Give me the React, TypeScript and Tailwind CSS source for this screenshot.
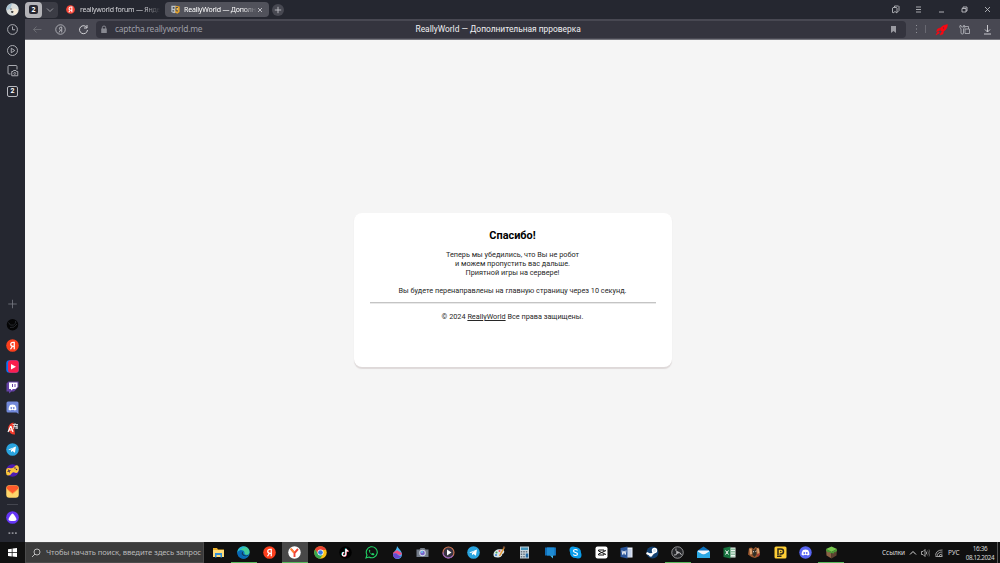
import type { ReactNode } from "react";

type IconProps = { children: ReactNode; size?: string };

const Icon = ({ children, size = "h-[13px] w-[13px]" }: IconProps) => (
	<svg viewBox="0 0 26 26" className={`${size} flex-none`} fill="none">
		{children}
	</svg>
);

const Ya = () => (
	<>
		<circle cx="13" cy="13" r="12.6" fill="#fc3f1d" />
		<path d="M16.500 20.500V6.500h-2.500c-3 0-4.500 1.500-4.500 4 0 2.600 1.500 4 4.500 4h2M13 14.500 9 20.500" stroke="#fff" strokeWidth="2.500" />
	</>
);

const Telegram = () => (
	<>
		<circle cx="13" cy="13" r="12.600" fill="#29a4df" />
		<path d="M4.500 13 20 6.800 17.800 19.500l-5-3.600-2.500 2.400-.5-4.200 6.200-5.200-8 4.900z" fill="#fff" />
	</>
);

const Discord = () => (
	<path
		d="M8 8q5-2.500 10 0 3 4 3 9-2 2-4 2l-1-1.600q-3 .9-6 0L9 19q-2 0-4-2 0-5 3-9zm2.500 4a1.700 2 0 1 0 .1 0zm5 0a1.700 2 0 1 0 .1 0z"
		fill="#fff"
		fillRule="evenodd"
	/>
);

const Sidebar = () => (
	<aside className="flex w-[25px] flex-none flex-col items-center bg-[#252730] text-[#b9bac0]">
		<div className="flex h-[19px] items-center">
			<Icon>
				<circle cx="13" cy="13" r="12.500" fill="#d9dcda" />
				<path d="M3 6q4-6 9-5L9 11l-8 4q-1-5 2-9z" fill="#a8c3d2" />
				<path d="M13 12q7-3 11 3-2 8-8 9z" fill="#f6e9d5" />
				<circle cx="10" cy="12" r="1.500" fill="#555" />
				<path d="M10 16h5l-1 4h-3z" fill="#444" />
			</Icon>
		</div>
		<div className="flex h-[79px] flex-col items-center justify-between pt-[4px]">
			<Icon>
				<circle cx="13" cy="13" r="9.800" stroke="currentColor" strokeWidth="1.800" />
				<path d="M13 7v6.500h5" stroke="currentColor" strokeWidth="1.800" />
			</Icon>
			<Icon>
				<circle cx="13" cy="13" r="10" stroke="currentColor" strokeWidth="1.800" />
				<path d="m10.500 8.500 7 4.500-7 4.500z" stroke="currentColor" strokeWidth="1.800" />
			</Icon>
			<Icon>
				<path d="M9 20H6q-2 0-2-2V5q0-2 2-2h14q2 0 2 2v6" stroke="currentColor" strokeWidth="1.800" />
				<path d="M11.500 15H14l1-2h5l1 2h2.500v8.500h-12z" stroke="currentColor" strokeWidth="1.800" />
				<circle cx="17.500" cy="18.800" r="2" stroke="currentColor" strokeWidth="1.500" />
			</Icon>
			<div className="flex h-[13px] items-center">
				<span className="flex h-[11px] w-[11px] items-center justify-center rounded-[2px] border border-[#b9bac0] pt-px font-['Roboto',sans-serif] text-[7px] leading-none font-bold text-white">
					2
				</span>
			</div>
		</div>
		<div className="mt-auto flex h-[201px] flex-col items-center justify-between">
			<Icon>
				<path d="M13 5.500v17M4.500 14h17" stroke="#7e8089" strokeWidth="1.500" />
			</Icon>
			<Icon>
				<circle cx="13" cy="13.500" r="11.500" fill="#050506" />
				<path d="M5 9q3 8 10 5 7-4 4-8M8 19q9 2 14-7" stroke="#34363d" strokeWidth="1.400" />
			</Icon>
			<Icon>
				<Ya />
			</Icon>
			<Icon>
				<rect x=".5" y=".5" width="25" height="25" rx="6" fill="#0a74f4" />
				<rect x="4" y=".5" width="21.500" height="25" rx="6" fill="#fa1e4e" />
				<path d="m10 8 10 5.500-10 5.500z" fill="#fff" />
			</Icon>
			<Icon>
				<path d="m5 1-4 4v16h5v4l5-4h5l9-9V1z" fill="#6441a5" />
				<path d="M6 3h17v9l-4 4h-5l-4 3v-3H6z" fill="#fff" />
				<path d="M13 6v6M18 6v6" stroke="#6441a5" strokeWidth="2" />
			</Icon>
			<Icon>
				<path d="M4 1h18q3 0 3 3v22l-4-3H4q-3 0-3-3V4q0-3 3-3z" fill="#7289da" />
				<Discord />
			</Icon>
			<Icon>
				<path d="M15 1A12 12 0 1 0 18 25z" fill="#f33b2b" />
				<path d="m4 20 5-11h1l4 11M6.500 16h6" stroke="#fff" strokeWidth="2.300" />
				<path d="M13 5h11M18 2v3M15 9h8M22 5v9M17 6l-2 8M18 12h6" stroke="#e6e6e8" strokeWidth="1.700" />
			</Icon>
			<Icon>
				<Telegram />
			</Icon>
			<Icon>
				<circle cx="13" cy="13" r="12.500" fill="#4d1cb3" />
				<path d="M0 17Q-1 7 6 8q3 1 7 0 3-1 5-4 4-3 7 1 2 6-1 11-3 3-7 1-3-1-5 1-3 5-8 5-4-1-4-6z" fill="#fcc63c" />
				<path d="m5 11 2 6m-4-2 6-2" stroke="#33205e" strokeWidth="1.800" />
				<circle cx="18" cy="8" r="1.500" fill="#33205e" />
				<circle cx="21" cy="11" r="1.500" fill="#33205e" />
			</Icon>
			<Icon>
				<rect x=".5" y=".5" width="25" height="25" rx="6" fill="#ffd66b" />
				<path d="M1 7q0-6 6-6h12q6 0 6 6L13 17z" fill="#ff5a2b" />
				<path d="m1 8 12 9.500L25 8" stroke="#ffa040" strokeWidth="1.500" />
			</Icon>
		</div>
		<div className="mt-[6px] h-px w-[11px] bg-[#44464f]" />
		<div className="mt-[6px]">
			<Icon>
				<circle cx="13" cy="13" r="12.700" fill="#6536f5" />
				<path d="M13 5c2 0 8 9 8 12 0 4-16 4-16 0 0-3 6-12 8-12z" fill="#fff" />
			</Icon>
		</div>
		<div className="mt-[3px] h-[15px]">
			<Icon>
				<path d="M5 12h3.500M11.500 12H15M18 12h3.500" stroke="#8c8d94" strokeWidth="3.500" />
			</Icon>
		</div>
	</aside>
);

const TabBar = () => (
	<header className="flex h-[19px] flex-none items-center bg-[#252730] font-['Noto_Sans',sans-serif] text-[7px] text-[#d4d4d8]">
		<div className="flex h-[16px] w-[33px] items-center rounded-[4px] bg-[#3b3c45]">
			<div className="flex h-[16px] w-[17px] items-center justify-center rounded-[4px] bg-[#b3b3b7]">
				<span className="flex h-[9px] w-[9px] items-center justify-center rounded-[2px] bg-[#272831] text-[7px] leading-none font-bold text-white">2</span>
			</div>
			<svg viewBox="0 0 8 8" className="ml-[4px] h-[8px] w-[8px]" fill="none" stroke="#96979e">
				<path d="m1 2.500 3 3 3-3" />
			</svg>
		</div>
		<div className="ml-[8px] flex w-[99px] items-center">
			<Icon size="h-[9px] w-[9px]">
				<circle cx="13" cy="13" r="12.600" fill="#f84637" />
				<path d="M17 21V6h-3c-6 0-7 7-2 9l-4 6M14 15h3" stroke="#fff" strokeWidth="3" />
			</Icon>
			<div className="ml-[5px] w-[80px] mask-r-from-80% pt-px tracking-[-0.260px] whitespace-nowrap">reallyworld forum — Янде</div>
		</div>
		<div className="flex h-[15px] w-[104px] items-center rounded-[4px] bg-[#51525b] pr-[5px] pl-[6px] text-white">
			<Icon size="h-[9px] w-[9px]">
				<path d="M1 2h13v20l-5 2-8-4z" fill="#b9c2ca" />
				<path d="M13 2 25 4v16l-7 5-6-3z" fill="#e5a32c" />
				<path d="M5 6h5v5H5zM14 6h6v13h-4l-3-4zM4 15h5v4H4z" fill="#4a4d54" />
				<path d="M16 9h4v6h-4z" fill="#f5c963" />
			</Icon>
			<div className="ml-[4px] w-[73px] flex-none mask-r-from-80% pt-[1.500px] tracking-[-0.200px] whitespace-nowrap">ReallyWorld — Дополн</div>
			<svg viewBox="0 0 6 6" className="ml-0 h-[6px] w-[6px] flex-none" stroke="#d6d6da" strokeWidth=".8">
				<path d="m1 1 4 4m0-4L1 5" />
			</svg>
		</div>
		<div className="ml-[3px] flex h-[12px] w-[12px] items-center justify-center rounded-full bg-[#474851]">
			<svg viewBox="0 0 8 8" className="h-[8px] w-[8px]" stroke="#c1c2c7" strokeWidth=".9">
				<path d="M4 .8v6.400M.8 4h6.400" />
			</svg>
		</div>
		<div className="ml-auto flex items-center gap-[10px] pr-[6px] text-[#bfc0c5]">
			<Icon>
				<path d="M11 8V6h8l1 1v8l-3 3M7 10l1-1h7l1 1v10l-4-3-4 3-1-1z" stroke="currentColor" strokeWidth="1.700" strokeLinejoin="round" />
			</Icon>
			<Icon>
				<path d="M8 8h10M8 13h10M8 18h10" stroke="currentColor" strokeWidth="1.700" />
			</Icon>
			<Icon>
				<path d="M8 18h10" stroke="currentColor" strokeWidth="1.800" />
			</Icon>
			<Icon>
				<path d="M10 10V8h8v8h-2M8 11h8v7H8z" stroke="currentColor" strokeWidth="1.800" />
			</Icon>
			<Icon>
				<path d="m8 8 10 10m0-10L8 18" stroke="currentColor" strokeWidth="1.700" />
			</Icon>
		</div>
	</header>
);

const AddressBar = () => (
	<div className="flex h-[21px] flex-none items-center border-b border-[#77777e] bg-[#484852] text-[#b9bac0]">
		<div className="flex w-[71px] items-center gap-[10px] pl-[6px]">
			<Icon>
				<path d="M21 13H5m6-6-6 6 6 6" stroke="#707179" strokeWidth="1.700" />
			</Icon>
			<Icon>
				<circle cx="13" cy="13" r="9.500" stroke="currentColor" strokeWidth="1.700" />
				<path d="M15.500 19V8H14c-4 0-4 5-1 6l-3 5M13 14h2" stroke="currentColor" strokeWidth="1.900" />
			</Icon>
			<Icon>
				<path d="M20 9.500A8 8 0 1 0 21 14M20 4v6h-6" stroke="#d1d1d5" strokeWidth="2" />
			</Icon>
		</div>
		<div className="flex h-[17px] w-[810px] items-center rounded-[4px] bg-[#34343e] pr-[6px] pl-[4px]">
			<svg viewBox="0 0 8 9" className="h-[9px] w-[8px]" fill="none">
				<path d="M2.300 4V2.700a1.700 1.700 0 0 1 3.400 0V4" stroke="#888991" />
				<rect x="1.200" y="3.500" width="5.600" height="4.500" rx=".5" fill="#888991" />
			</svg>
			<div className="ml-[7px] w-[300.500px] font-['Noto_Sans',sans-serif] text-[8.400px] tracking-[-0.190px] text-[#9d9ea6]">captcha.reallyworld.me</div>
			<div className="font-['Roboto',sans-serif] text-[8.400px] whitespace-nowrap text-[#f0f0f2]">ReallyWorld — Дополнительная прроверка</div>
			<svg viewBox="0 0 7 9" className="mr-[3px] ml-auto h-[9px] w-[7px]">
				<path d="M1 1h5v7L3.500 6 1 8z" fill="#9a9aa1" />
			</svg>
		</div>
		<div className="flex w-[15px] justify-center pl-[5px]">
			<svg viewBox="0 0 3 10" className="h-[10px] w-[3px]" fill="#92939a">
				<path d="M1 1h1v1H1zm0 3.500h1v1H1zM1 8h1v1H1z" />
			</svg>
		</div>
		<div className="ml-[4px] h-[8px] w-px bg-[#686871]" />
		<div className="ml-auto flex items-center gap-[10px] pr-[6px]">
			<Icon>
				<path d="M10 11q5-7 15-8 0 9-8 14l-5-1zM10 10l-5 2-2 5 6-2zM17 17l-1 5-6 2 3-6zM6 17l-4 7 7-4z" fill="#fa0711" stroke="#fa0711" />
				<circle cx="17" cy="10" r="1.400" fill="#782832" />
			</Icon>
			<Icon>
				<path d="M5 4q-4 4 1 8v8q0 2 3 2 2 0 2-2v-8q5-3 1-8l-1 4H7z" stroke="currentColor" strokeWidth="1.600" />
				<path d="M14 7h7v5M14 12h9v9h-9z" stroke="currentColor" strokeWidth="1.600" />
			</Icon>
			<Icon>
				<path d="M13 4v14m-5-5 5 5 5-5M6 22h14" stroke="#d0d0d4" strokeWidth="1.900" />
			</Icon>
		</div>
	</div>
);

const Card = () => (
	<section className="h-[153.500px] w-[318px] rounded-[8px] bg-white px-[16px] pt-[16px] text-center font-['Roboto',sans-serif] text-[7.300px] leading-[9px] text-[#272727] shadow-[0_1.500px_1px_#ded9d9]">
		<h1 className="text-[10.900px] leading-[14px] font-bold text-black">Спасибо!</h1>
		<p className="mt-[7px]">
			Теперь мы убедились, что Вы не робот
			<br />и можем пропустить вас дальше.
			<br />
			Приятной игры на сервере!
		</p>
		<p className="mt-[9px]">Вы будете перенаправлены на главную страницу через 10 секунд.</p>
		<hr className="mt-[7px] h-[2px] border-t border-[#c4c4c4] bg-[#e9e9e9]" />
		<p className="mt-[8px]">
			© 2024 <a className="underline">ReallyWorld</a> Все права защищены.
		</p>
	</section>
);

type TaskApp = { name: string; icon: ReactNode; open?: boolean; active?: boolean };

const apps: TaskApp[] = [
	{
		name: "explorer",
		icon: (
			<>
				<path d="M2 4h8l2 3h12v15H2z" fill="#eeb32d" />
				<path d="M2 8h22v14H2z" fill="#ffdc78" />
				<path d="M6 14h14v9h-3v-5H9v5H6z" fill="#318fd8" />
			</>
		),
	},
	{
		name: "edge",
		open: true,
		icon: (
			<>
				<circle cx="13" cy="13" r="12.500" fill="#087fc2" />
				<path d="M1 12C3-3 25-2 25 12c0 7-9 7-10 3 2-6-9-11-14-3z" fill="#44cc99" />
				<path d="M1 12C3 3 11-1 18 3q-7-1-10 4-5 1-7 5z" fill="#25b5d8" />
				<path d="M1 12q5-5 11-2-5 3-2 9 5 6 12 2-7 8-16 2-6-4-5-11z" fill="#0867b5" />
				<path d="M13 10q-3 5 2 8 5 2 8-1l-1 3q-10 3-13-4 0-4 4-6z" fill="#103b67" />
			</>
		),
	},
	{ name: "yandex", icon: <Ya /> },
	{
		name: "browser",
		open: true,
		active: true,
		icon: (
			<>
				<circle cx="13" cy="13" r="12.500" fill="#fff" />
				<path d="m6 6 7 8 7-8M13 13v9" stroke="#f04438" strokeWidth="3.800" />
				<path d="m5 5 7 8" stroke="#ff8a30" strokeWidth="3" />
			</>
		),
	},
	{
		name: "chrome",
		icon: (
			<>
				<circle cx="13" cy="13" r="12.500" fill="#fbc116" />
				<path d="M2.200 6.800A12.500 12.500 0 0 1 24.500 8H13l-5.400 8z" fill="#ea4335" />
				<path d="M2.200 6.800A12.500 12.500 0 0 0 12 25.500l6-9-10-1z" fill="#34a853" />
				<circle cx="13" cy="13" r="6" fill="#fff" />
				<circle cx="13" cy="13" r="4.700" fill="#3478e5" />
			</>
		),
	},
	{
		name: "tiktok",
		icon: (
			<>
				<circle cx="13" cy="13" r="12.500" fill="#000" />
				<path d="M13 5v11a3.500 3.500 0 1 1-3.500-3.500M13 5q1 4 5 4" stroke="#25f4ee" strokeWidth="2.500" />
				<path d="M14.500 7v10a3.500 3.500 0 1 1-3.500-3.500M14.500 6q1 4 5 5" stroke="#fe2c55" strokeWidth="2.300" />
				<path d="M13.700 6v10.500a3.500 3.500 0 1 1-3.500-3.500M13.700 6q1 4 5 4" stroke="#fff" strokeWidth="2.300" />
			</>
		),
	},
	{
		name: "whatsapp",
		icon: (
			<>
				<path d="m2 24 2-6A11 11 0 1 1 8 22z" stroke="#21d366" strokeWidth="2.200" />
				<path d="M9 7q-3 2 0 6 5 7 9 5 2-2 0-3l-3-1-1.500 1.500q-3-1-4-4L11 10z" fill="#21d366" />
			</>
		),
	},
	{
		name: "paint3d",
		icon: (
			<>
				<path d="M12 0c3 6 10 10 10 17a9 9 0 0 1-18 0C4 11 12 9 12 0z" fill="#4bb6f0" />
				<path d="M12 8c3 3 9 4 10 8q-4 4-9 0-5-3-9 0c0-5 6-5 8-8z" fill="#ef4d83" />
				<path d="M4 16q6-3 9 1 4 4 8 3-6 8-14 4-3-3-3-8z" fill="#6845cf" />
			</>
		),
	},
	{
		name: "camera",
		icon: (
			<>
				<path d="M1 7h6l2-3h8l2 3h6v15H1z" fill="#737b88" />
				<circle cx="13" cy="14" r="6.500" fill="#d4dce9" />
				<circle cx="13" cy="14" r="4.700" fill="#7866cb" />
				<circle cx="12" cy="12" r="2" fill="#69c8ec" />
			</>
		),
	},
	{
		name: "player",
		icon: (
			<>
				<circle cx="13" cy="13" r="11" fill="#383443" stroke="#d67a55" strokeWidth="2.200" />
				<path d="M2 13a11 11 0 0 0 20 6" stroke="#8c60c2" strokeWidth="2.200" />
				<path d="m10 7 9 6-9 6z" fill="#fff" />
			</>
		),
	},
	{ name: "telegram", icon: <Telegram /> },
	{
		name: "paint",
		icon: (
			<>
				<path d="M1 18C1 9 9 5 19 7q6 3 2 8-3 0-3 4-3 5-9 4-8 0-8-5z" fill="#d8e4e9" />
				<circle cx="7" cy="13" r="2" fill="#4ea64e" />
				<circle cx="13" cy="10" r="2" fill="#ef5350" />
				<circle cx="6" cy="18" r="2" fill="#3784d6" />
				<path d="m13 20 9-16" stroke="#e99932" strokeWidth="3" />
				<path d="m21 5 2-4" stroke="#7c5034" strokeWidth="4" />
			</>
		),
	},
	{
		name: "calculator",
		icon: (
			<>
				<path d="M4 1h18v24H4z" fill="#c6d4dc" />
				<path d="M6 3h14v5H6z" fill="#4393b9" />
				<path d="M7 10v13M12 10v13M17 10v4" stroke="#65717e" strokeWidth="3" strokeDasharray="3 2" />
				<path d="M15.500 15h5v8h-5z" fill="#1d67a2" />
			</>
		),
	},
	{
		name: "remote",
		icon: (
			<>
				<path d="M2 3h22v16H2z" fill="#126db5" />
				<path d="M6 3h15v16H6z" fill="#1e8bd3" />
				<path d="m12 19 6 6v-6z" fill="#42b8ed" />
			</>
		),
	},
	{
		name: "skype",
		icon: (
			<>
				<circle cx="13" cy="13" r="11" fill="#0a9ce8" />
				<circle cx="8" cy="8" r="7" fill="#0a9ce8" />
				<circle cx="18" cy="18" r="7" fill="#0a9ce8" />
				<path d="M17 9q-1-2-4-2-4 0-4 3 0 2 4 3t4 3q0 3-4 3-3 0-4.500-2" stroke="#fff" strokeWidth="2.400" />
			</>
		),
	},
	{
		name: "capcut",
		icon: (
			<>
				<rect x="1" y="1" width="24" height="24" rx="4" fill="#fff" />
				<path d="M18 10V8H7v2l15 7M18 16v2H7v-2l15-7" stroke="#111" strokeWidth="2" />
			</>
		),
	},
	{
		name: "word",
		icon: (
			<>
				<path d="M12 3h13v20H12z" fill="#edf2fc" />
				<path d="M15 8h8M15 12h8M15 16h8M15 20h8" stroke="#5374b4" />
				<path d="m1 4 14-3v24L1 22z" fill="#2b569a" />
				<path d="m4 9 1.500 8L8 10l2.500 7L12 9" stroke="#fff" strokeWidth="1.700" />
			</>
		),
	},
	{
		name: "steam",
		icon: (
			<>
				<circle cx="13" cy="13" r="12" fill="#124070" />
				<path d="m1 14 9 4 7-6" stroke="#fff" strokeWidth="4.500" />
				<circle cx="17" cy="9" r="4.300" fill="#d8e3ef" stroke="#fff" strokeWidth="2.200" />
				<circle cx="9.500" cy="18" r="3.500" fill="#fff" />
			</>
		),
	},
	{
		name: "obs",
		open: true,
		icon: (
			<>
				<circle cx="13" cy="13" r="11.500" fill="#26272a" stroke="#bcbcbe" strokeWidth="1.500" />
				<path d="M13 12q-5-2-3-7M14 13q5-1 7 5M12 14q0 5-6 4" stroke="#bcbcbe" strokeWidth="1.900" />
				<circle cx="13" cy="13" r="2.500" fill="#bcbcbe" />
			</>
		),
	},
	{
		name: "mail",
		icon: (
			<>
				<path d="m0 10 13-9 13 9v14H0z" fill="#0d70bb" />
				<path d="M2 9h22v8H2z" fill="#f1f7fc" />
				<path d="m0 10 13 8 13-8v14H0z" fill="#2baae5" />
			</>
		),
	},
	{
		name: "excel",
		icon: (
			<>
				<path d="M12 3h13v20H12z" fill="#edf6ef" />
				<path d="M18 5v16M22 5v16" stroke="#2d8250" strokeWidth="2" strokeDasharray="3 2" />
				<path d="m1 4 14-3v24L1 22z" fill="#16723e" />
				<path d="m5 9 6 8m0-8-6 8" stroke="#fff" strokeWidth="2" />
			</>
		),
	},
	{
		name: "game",
		icon: (
			<>
				<path d="m2 4 5-1 4 3 4-4 4 2 3-1 2 13-3 5-7 3-7-2-7-5z" fill="#99572e" />
				<path d="m3 6 4-1 2 11-5 1zM18 4l4 2 1 9-4 2z" fill="#e0a470" />
				<path d="m9 6 3 3 4-5 1 13-4 5-4-4z" fill="#343027" />
				<path d="m10 11 2 1m3-1 2-1" stroke="#fff" strokeWidth="1.800" />
				<path d="m18 16 6-2v4l-5 4z" fill="#a13d30" />
			</>
		),
	},
	{
		name: "player-yellow",
		icon: (
			<>
				<rect x="1" y="1" width="24" height="24" rx="3" fill="#ffcf36" />
				<path d="M8 18V6h6a5 5 0 1 1 0 10h-3M6 20.500h9" stroke="#2d2919" strokeWidth="3" />
				<circle cx="13.500" cy="11" r="1.500" fill="#2d2919" />
			</>
		),
	},
	{
		name: "discord",
		icon: (
			<>
				<circle cx="13" cy="13" r="12.500" fill="#5865f2" />
				<Discord />
			</>
		),
	},
	{
		name: "minecraft",
		open: true,
		icon: (
			<>
				<path d="m2 6 11 6v13L3 19z" fill="#8a6145" />
				<path d="m24 6-11 6v13l10-6z" fill="#5c4030" />
				<path d="m2 6 11-5 11 5-11 6z" fill="#79c850" />
				<path d="m2 6 11 6 11-6v4l-3 2v1l-3-1v3l-5-1-3 1v-3l-4 1-4-4z" fill="#4b9836" />
			</>
		),
	},
];

const Taskbar = () => (
	<footer className="flex h-[21px] flex-none bg-[#101010] text-[#d8d8d8]">
		<div className="flex w-[25px] items-center justify-center">
			<svg viewBox="0 0 18 18" className="h-[9px] w-[9px]" fill="#fff">
				<path d="m0 2.500 7.500-1v7H0zM9 1.200 18 0v8.500H9zM0 10h7.500v7L0 16zM9 10h9v8l-9-1.200z" />
			</svg>
		</div>
		<div className="flex w-[179px] items-center border border-[#4b4b4b] bg-[#3b3b3b] pl-[5px]">
			<svg viewBox="0 0 20 20" className="h-[10px] w-[10px]" fill="none" stroke="#d0d0d0" strokeWidth="1.700">
				<circle cx="12" cy="8" r="6" />
				<path d="m8 12-6 6" />
			</svg>
			<span className="ml-[5px] font-['Noto_Sans',sans-serif] text-[7.700px] tracking-[-0.110px] whitespace-nowrap text-[#b9b9b9]">
				Чтобы начать поиск, введите здесь запрос
			</span>
		</div>
		<div className="ml-[1.500px] grid w-[638.500px] grid-cols-[repeat(25,minmax(0,1fr))]">
			{apps.map((app) => (
				<div
					key={app.name}
					className={`flex items-center justify-center border-b pt-px ${app.open ? "border-[#58b85c]" : "border-transparent"} ${app.active ? "bg-[#484848]" : ""}`}
				>
					<Icon>{app.icon}</Icon>
				</div>
			))}
		</div>
		<div className="ml-auto flex items-center font-['Noto_Sans',sans-serif] text-[6.500px] leading-[9px]">
			<span className="w-[23px] tracking-[-0.100px]">Ссылки</span>
			<svg viewBox="0 0 8 8" className="ml-[4px] h-[8px] w-[8px]" fill="none" stroke="currentColor">
				<path d="m1 5.500 3-3 3 3" />
			</svg>
			<svg viewBox="0 0 18 16" className="ml-[4px] h-[8px] w-[9px]" fill="none" stroke="currentColor" strokeWidth="1.400">
				<path d="M1 5h3l4-4v14l-4-4H1zM10 5q3 3 0 6" />
				<path d="M13 3q4 5 0 10M16 1q4 7 0 14" stroke="#777" />
			</svg>
			<svg viewBox="0 0 16 16" className="ml-[5px] h-[8px] w-[8px]" fill="none" stroke="currentColor" strokeWidth="1.400">
				<path d="M1 13Q2 2 15 2M4 14q1-8 11-8M8 15q0-5 7-5M11 15q1-2 4-2M1 15h14" />
			</svg>
			<span className="ml-[5px] w-[12px] text-[6.500px]">РУС</span>
			<div className="ml-[5px] w-[30px] text-center text-[6.300px] tracking-[-0.350px] whitespace-nowrap">
				<div>16:36</div>
				<div>08.12.2024</div>
			</div>
			<div className="ml-[2px] h-full w-[3px] border-l border-[#555]" />
		</div>
	</footer>
);

export default function App() {
	return (
		<div className="flex h-[563px] w-[1000px] flex-col overflow-hidden">
			<div className="flex h-[542px]">
				<Sidebar />
				<div className="flex min-w-0 flex-1 flex-col">
					<TabBar />
					<AddressBar />
					<main className="flex flex-1 justify-center bg-[#f5f5f5] pt-[173px]">
						<Card />
					</main>
				</div>
			</div>
			<Taskbar />
		</div>
	);
}
